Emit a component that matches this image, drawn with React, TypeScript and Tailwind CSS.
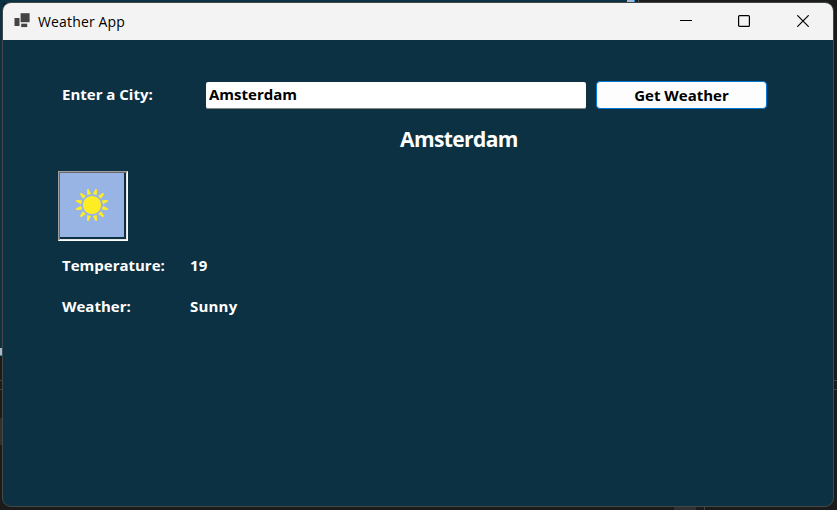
import React from "react";

function AppIcon() {
  return (
    <svg width="16" height="16" viewBox="0 0 16 16" className="-mt-px ml-[11px] shrink-0">
      <g fill="#444444">
        <rect x="6.6" y="0.2" width="9" height="9" />
        <rect x="0.5" y="5" width="5" height="8" />
        <rect x="7.2" y="10.7" width="6" height="3.4" />
      </g>
    </svg>
  );
}

function TitleBar() {
  return (
    <header className="flex h-[37px] shrink-0 items-center bg-[#f3f3f3] text-black">
      <AppIcon />
      <h1 className="ml-2 grow whitespace-nowrap text-[14px] leading-5 tracking-[0.15px]">Weather App</h1>
      <div className="mb-px mr-6 flex items-center gap-[47px]">
        <svg width="12" height="12" viewBox="0 0 12 12" aria-label="Minimize" className="-mr-px">
          <path d="M0 5.5H12" stroke="#000" />
        </svg>
        <svg width="12" height="12" viewBox="0 0 12 12" aria-label="Maximize">
          <rect x="0.6" y="0.6" width="10.8" height="10.8" rx="1" fill="none" stroke="#000" strokeWidth="1.2" />
        </svg>
        <svg width="12" height="12" viewBox="0 0 12 12" aria-label="Close">
          <path d="M0.3 0.3L11.7 11.7M11.7 0.3L0.3 11.7" stroke="#000" strokeWidth="1.2" />
        </svg>
      </div>
    </header>
  );
}

const rayAngles = [15, 45, 75, 105, 135, 165, 195, 225, 255, 285, 315, 345];

function SunPicture() {
  return (
    <div className="h-[70px] w-[70px] border border-b-white border-l-[#a0a0a0] border-r-white border-t-[#a0a0a0]">
      <div className="h-full w-full border border-b-[#e3e3e3] border-l-[#696969] border-r-[#e3e3e3] border-t-[#696969]">
        <svg width="64" height="64" viewBox="0 0 64 64" className="block">
          <rect width="64" height="64" fill="#98b4e4" />
          <g fill="#ffed24">
            <circle cx="32" cy="32" r="9.1" />
            {rayAngles.map((a) => (
              <path key={a} d="M30 21.2L31.2 15.6H32.8L34 21.2Z" transform={`rotate(${a} 32 32)`} />
            ))}
          </g>
        </svg>
      </div>
    </div>
  );
}

function Reading({ label, value }: { label: string; value: string }) {
  return (
    <div className="flex h-[41px] text-[15px] leading-5">
      <dt className="w-32">{label}</dt>
      <dd className="tracking-[0.2px]">{value}</dd>
    </div>
  );
}

function Desktop() {
  return (
    <div className="absolute inset-0 bg-[#1b1b1b]">
      <div className="absolute left-0 top-0 h-[348px] w-[3px] bg-[#0c3143]" />
      <div className="absolute left-0 top-0 h-[3px] w-[627px] bg-[#0c3143]" />
      <div className="absolute left-[627px] top-0 h-[3px] w-[8px] border-r border-[#0a90d8] bg-[#a4b8d4]" />
      <div className="absolute left-[638px] top-0 h-[3px] w-px bg-[#555555]" />
      <div className="absolute left-0 top-[348px] h-[8px] w-[3px] border-b border-[#159a9a] bg-[#a4b8d4]" />
      <div className="absolute left-0 top-[380px] h-px w-full bg-[#444444]" />
      <div className="absolute left-0 top-[389px] h-px w-full bg-[#444444]" />
      <div className="absolute left-0 top-[418px] h-[27px] w-[3px] bg-[#303030]" />
      <div className="absolute bottom-0 left-[674px] h-[4px] w-[22px] bg-[#303034]" />
      <div className="absolute bottom-0 left-[704px] h-[4px] w-px bg-[#444444]" />
    </div>
  );
}

export default function App() {
  return (
    <div className="relative h-[510px] w-[837px] overflow-hidden pl-[2px] pt-[2px] font-['Open_Sans','Noto_Sans',sans-serif]">
      <Desktop />
      <main className="relative flex h-[505px] w-[832px] flex-col overflow-hidden rounded-[9px] border border-[#434746] bg-[#0c3143]">
        <TitleBar />
        <section className="flex flex-col pl-[55px] pt-[41px] font-bold text-white">
          <form className="flex h-7 items-center text-[15px]" onSubmit={(e) => e.preventDefault()}>
            <label htmlFor="city" className="mb-0.5 ml-1 w-36 leading-5">Enter a City:</label>
            <input id="city" defaultValue="Amsterdam" className="h-[27px] w-[380px] rounded-[2px] border-b border-[#898989] bg-white px-[3px] pb-px text-black outline-none" />
            <button className="ml-2.5 h-7 w-[171px] rounded-[4px] border border-[#0078d4] bg-[#fdfdfd] leading-5 text-black">Get Weather</button>
          </form>
          <h2 className="ml-[342px] mt-[15px] h-[47px] text-[21px] leading-[30px] tracking-[-0.6px]">Amsterdam</h2>
          <SunPicture />
          <dl className="ml-1 mt-[14px]">
            <Reading label="Temperature:" value="19" />
            <Reading label="Weather:" value="Sunny" />
          </dl>
        </section>
      </main>
    </div>
  );
}
